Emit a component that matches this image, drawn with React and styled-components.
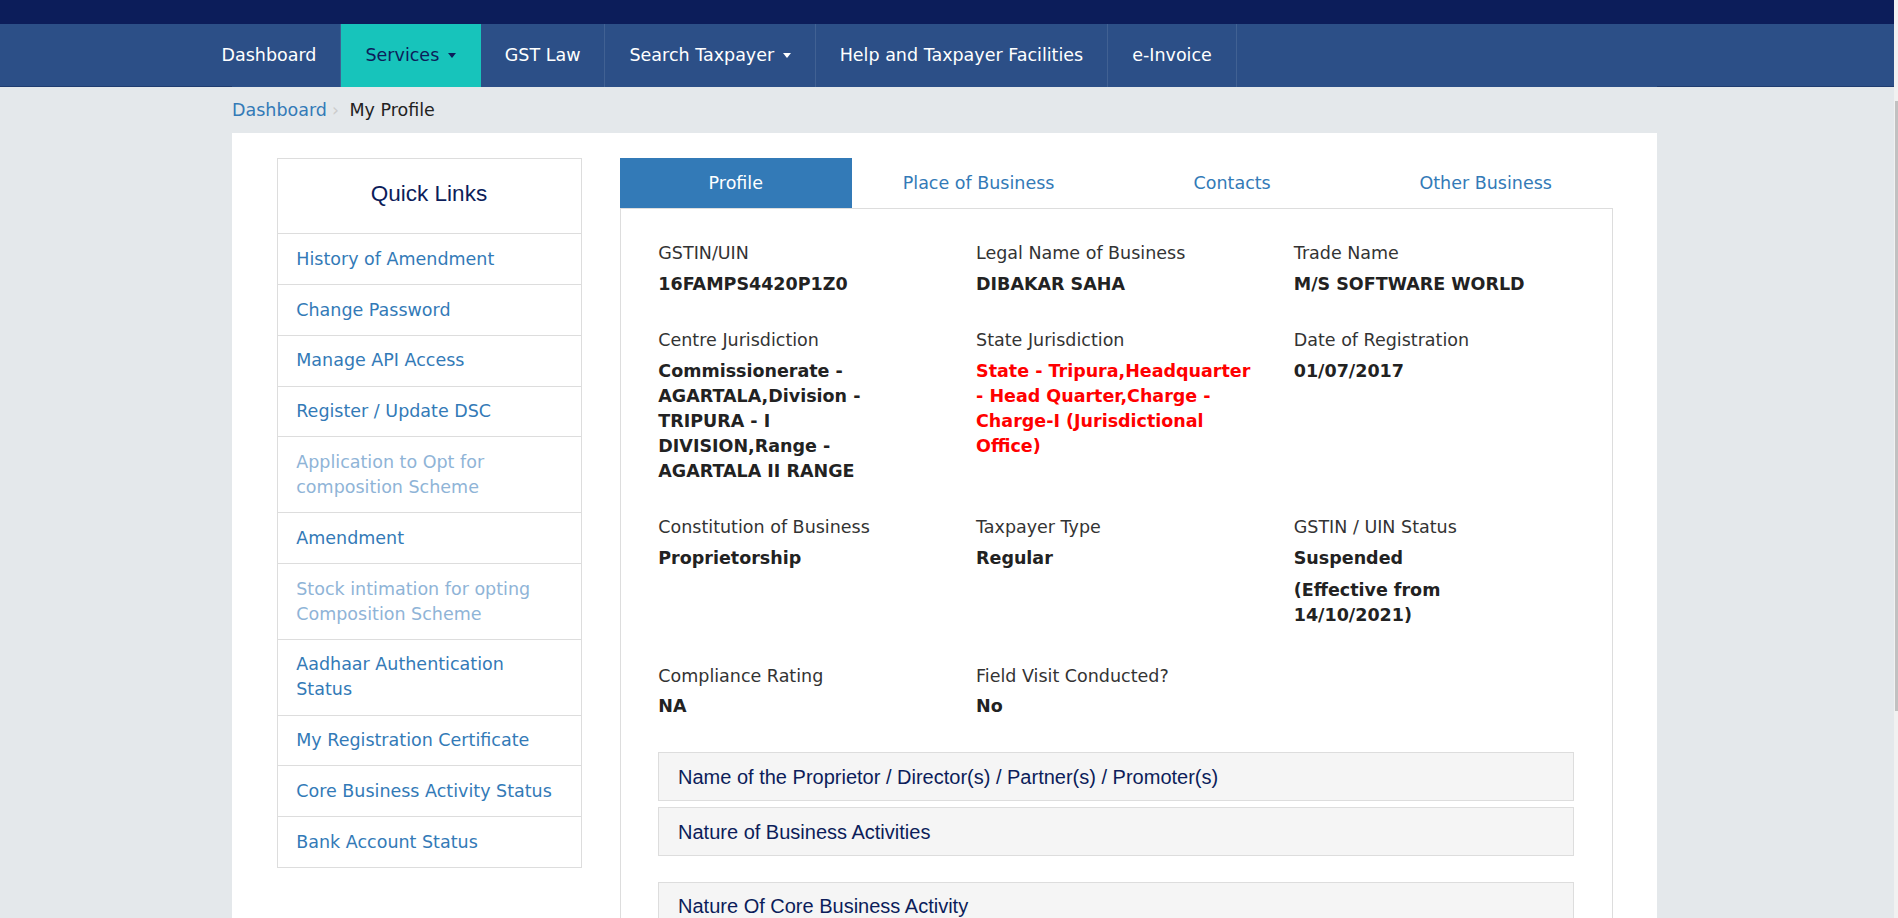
import styled, { createGlobalStyle } from "styled-components";

const GlobalStyle = createGlobalStyle`
  * { box-sizing: border-box; }
  body {
    margin: 0;
    background: #e4e8eb;
    font-family: "DejaVu Sans", Verdana, sans-serif;
    font-size: 17.5px;
    line-height: 25px;
    color: #333;
  }
`;

const Page = styled.div`
  width: calc(100% - 4px);
`;

const ScrollTrack = styled.div`
  position: fixed;
  top: 0;
  right: 0;
  width: 4px;
  height: 100vh;
  background: #f1f1f1;
`;

const ScrollThumb = styled.div`
  margin: 101px 0 0 1px;
  height: 610px;
  background: #c1c1c1;
`;

const TopStrip = styled.div`
  height: 24px;
  background: #0c1d5a;
`;

const NavBar = styled.nav`
  height: 63px;
  background: #2c4f87;
  box-shadow: inset 0 -1px 0 #1f3c70;
`;

const Wrap = styled.div`
  width: 1425px;
  margin-left: calc(50% - 715px);
`;

const NavInner = styled(Wrap)`
  height: 100%;
  background: #2c4f87;
`;

const NavList = styled.ul`
  display: flex;
  height: 100%;
  margin: 0 0 0 -34.5px;
  padding: 0;
  list-style: none;
`;

const NavItem = styled.li`
  display: flex;
  align-items: center;
  padding: 0 24px;
  white-space: nowrap;
  background: ${(p) => (p.$active ? "#17c4bb" : "transparent")};
  color: ${(p) => (p.$active ? "#0c1d5a" : "#fff")};
  border-right: 1px solid ${(p) => (p.$active ? "#17c4bb" : "#416193")};
`;

const Caret = styled.span`
  display: inline-block;
  width: 0;
  height: 0;
  margin-left: 8.5px;
  vertical-align: middle;
  border-top: 5px solid currentColor;
  border-left: 4.5px solid transparent;
  border-right: 4.5px solid transparent;
`;

const Crumbs = styled(Wrap)`
  display: flex;
  padding: 11px 0 9.7px;
`;

const CrumbLink = styled.a`
  color: #337ab7;
  text-decoration: none;
`;

const CrumbSep = styled.span`
  color: #ccc;
  padding: 0 10.5px 0 5px;
`;

const CrumbCurrent = styled.span`
  color: #222;
`;

const MainPanel = styled(Wrap)`
  display: flex;
  align-items: flex-start;
  gap: 38.3px;
  min-height: 1096px;
  padding: 25.6px 44.5px 40px;
  background: #fff;
`;

const Sidebar = styled.aside`
  flex: none;
  width: 305px;
  border: 1px solid #ddd;
`;

const SideTitle = styled.h3`
  margin: 0;
  padding: 23px 0 26.25px;
  border-bottom: 1px solid #ddd;
  font-family: "Liberation Sans", Arial, sans-serif;
  font-size: 22.5px;
  font-weight: normal;
  line-height: 24.75px;
  text-align: center;
  color: #0c1d5a;
`;

const SideLink = styled.a`
  display: block;
  padding: 12.5px 18.75px 12.3px;
  color: ${(p) => (p.$disabled ? "#8fb4d7" : "#337ab7")};
  text-decoration: none;
  & + & { border-top: 1px solid #ddd; }
`;

const Content = styled.section`
  flex: 1;
  min-width: 0;
`;

const Tabs = styled.div`
  display: flex;
`;

const Tab = styled.a`
  flex: ${(p) => (p.$active ? "0 0 232px" : "1 1 0")};
  padding: 12.5px 0;
  text-align: center;
  text-decoration: none;
  background: ${(p) => (p.$active ? "#337ab7" : "transparent")};
  color: ${(p) => (p.$active ? "#fff" : "#337ab7")};
`;

const TabPanel = styled.div`
  border: 1px solid #ddd;
  padding: 31.7px 18.75px 0;
`;

const DataGrid = styled.div`
  padding-bottom: 1.2px;
`;

const Row = styled.div`
  display: grid;
  grid-template-columns: repeat(3, 1fr);
  margin-bottom: 31.5px;
`;

const Field = styled.div`
  padding: 0 18.75px;
`;

const Label = styled.div`
  margin-bottom: 5.7px;
  color: #333;
`;

const Value = styled.div`
  font-weight: bold;
  color: ${(p) => (p.$red ? "#f00" : "#222")};
`;

const Line = styled.span`
  display: block;
  white-space: nowrap;
`;

const Note = styled(Value)`
  margin: 7px 0 4.2px;
`;

const Accordion = styled.div`
  padding: 0 18.75px;
  & + & { margin-top: 25.6px; }
`;

const AccPanel = styled.div`
  border: 1px solid #ddd;
  background: #f5f5f5;
  & + & { margin-top: 6.25px; }
`;

const AccTitle = styled.h4`
  margin: 0;
  padding: 12.5px 18.75px;
  font-family: "Liberation Sans", Arial, sans-serif;
  font-size: 20px;
  font-weight: normal;
  line-height: 22px;
  color: #0c1d5a;
`;

const navItems = [
  { label: "Dashboard" },
  { label: "Services", caret: true, active: true },
  { label: "GST Law" },
  { label: "Search Taxpayer", caret: true },
  { label: "Help and Taxpayer Facilities" },
  { label: "e-Invoice" },
];

const quickLinks = [
  { label: "History of Amendment" },
  { label: "Change Password" },
  { label: "Manage API Access" },
  { label: "Register / Update DSC" },
  { label: "Application to Opt for composition Scheme", disabled: true },
  { label: "Amendment" },
  { label: "Stock intimation for opting Composition Scheme", disabled: true },
  { label: "Aadhaar Authentication Status" },
  { label: "My Registration Certificate" },
  { label: "Core Business Activity Status" },
  { label: "Bank Account Status" },
];

const tabs = ["Profile", "Place of Business", "Contacts", "Other Business"];

const rows = [
  [
    { label: "GSTIN/UIN", lines: ["16FAMPS4420P1Z0"] },
    { label: "Legal Name of Business", lines: ["DIBAKAR SAHA"] },
    { label: "Trade Name", lines: ["M/S SOFTWARE WORLD"] },
  ],
  [
    {
      label: "Centre Jurisdiction",
      lines: ["Commissionerate -", "AGARTALA,Division -", "TRIPURA - I", "DIVISION,Range -", "AGARTALA II RANGE"],
    },
    {
      label: "State Jurisdiction",
      red: true,
      lines: ["State - Tripura,Headquarter", "- Head Quarter,Charge -", "Charge-I (Jurisdictional", "Office)"],
    },
    { label: "Date of Registration", lines: ["01/07/2017"] },
  ],
  [
    { label: "Constitution of Business", lines: ["Proprietorship"] },
    { label: "Taxpayer Type", lines: ["Regular"] },
    { label: "GSTIN / UIN Status", lines: ["Suspended"], note: ["(Effective from", "14/10/2021)"] },
  ],
  [
    { label: "Compliance Rating", lines: ["NA"] },
    { label: "Field Visit Conducted?", lines: ["No"] },
  ],
];

const App = () => {
  return (
    <Page>
      <GlobalStyle />
      <TopStrip />
      <NavBar>
        <NavInner>
          <NavList>
            {navItems.map((item) => (
              <NavItem key={item.label} $active={item.active}>
                {item.label}
                {item.caret && <Caret />}
              </NavItem>
            ))}
          </NavList>
        </NavInner>
      </NavBar>

      <Crumbs>
        <CrumbLink href="#">Dashboard</CrumbLink>
        <CrumbSep>›</CrumbSep>
        <CrumbCurrent>My Profile</CrumbCurrent>
      </Crumbs>

      <MainPanel>
        <Sidebar>
          <SideTitle>Quick Links</SideTitle>
          {quickLinks.map((link) => (
            <SideLink key={link.label} href="#" $disabled={link.disabled}>
              {link.label}
            </SideLink>
          ))}
        </Sidebar>

        <Content>
          <Tabs>
            {tabs.map((t, i) => (
              <Tab key={t} href="#" $active={i === 0}>
                {t}
              </Tab>
            ))}
          </Tabs>
          <TabPanel>
            <DataGrid>
              {rows.map((row, i) => (
                <Row key={i}>
                  {row.map((f) => (
                    <Field key={f.label}>
                      <Label>{f.label}</Label>
                      <Value $red={f.red}>
                        {f.lines.map((l) => (
                          <Line key={l}>{l}</Line>
                        ))}
                      </Value>
                      {f.note && (
                        <Note>
                          {f.note.map((l) => (
                            <Line key={l}>{l}</Line>
                          ))}
                        </Note>
                      )}
                    </Field>
                  ))}
                </Row>
              ))}
            </DataGrid>

            <Accordion>
              <AccPanel>
                <AccTitle>Name of the Proprietor / Director(s) / Partner(s) / Promoter(s)</AccTitle>
              </AccPanel>
              <AccPanel>
                <AccTitle>Nature of Business Activities</AccTitle>
              </AccPanel>
            </Accordion>
            <Accordion>
              <AccPanel>
                <AccTitle>Nature Of Core Business Activity</AccTitle>
              </AccPanel>
            </Accordion>
          </TabPanel>
        </Content>
      </MainPanel>

      <ScrollTrack>
        <ScrollThumb />
      </ScrollTrack>
    </Page>
  );
};

export default App;
